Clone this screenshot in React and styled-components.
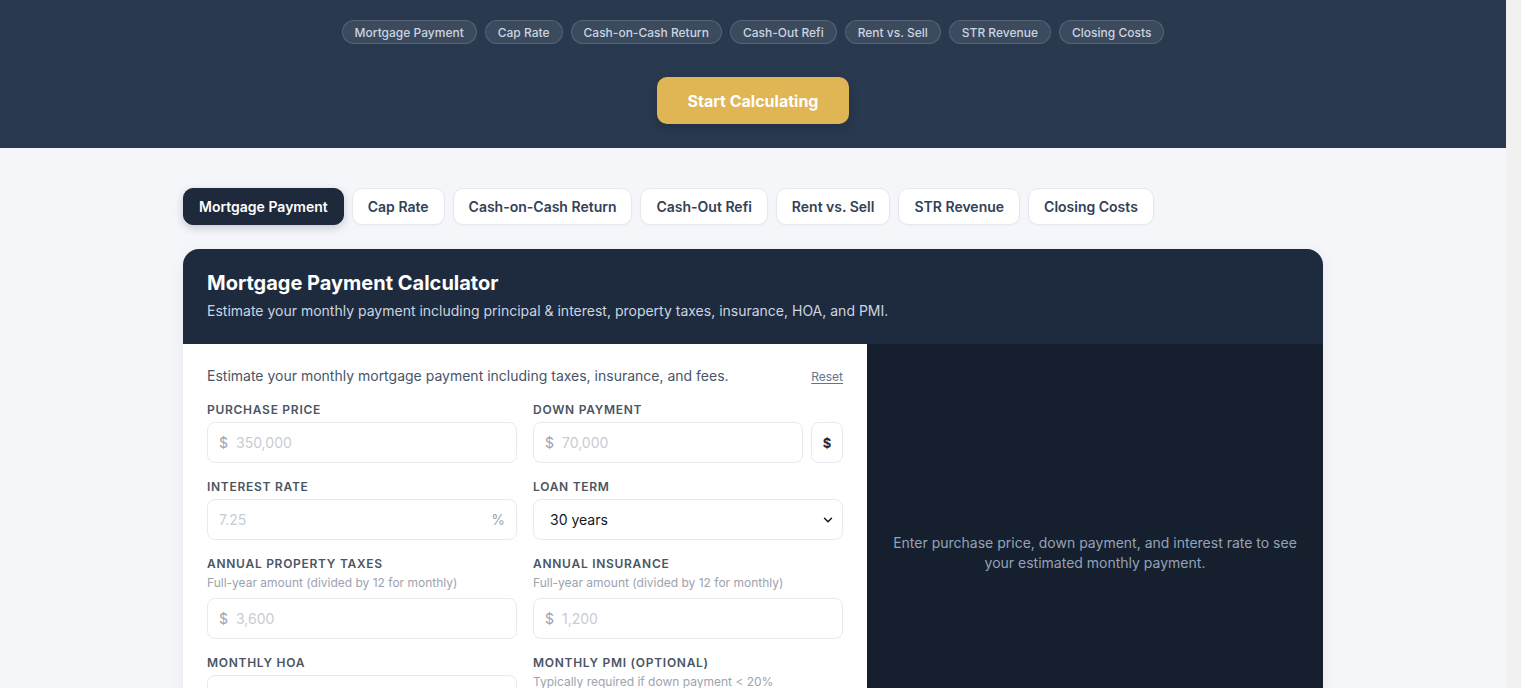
import React from 'react'
import styled, { createGlobalStyle } from 'styled-components'
import { ChevronDown } from 'lucide-react'

const GlobalStyle = createGlobalStyle`
  * { box-sizing: border-box; }
  body {
    margin: 0;
    background: #f1f1f1;
    padding-right: 15px;
    font-family: Inter, "Noto Sans", sans-serif;
    color: #1e293b;
  }
`

const Page = styled.div`
  background: #f4f6fa;
  min-height: 100vh;
`

const Hero = styled.section`
  background: #29394f;
  padding: 20px 0 24px;
  display: flex;
  flex-direction: column;
  align-items: center;
  gap: 33px;
`

const PillRow = styled.div`
  display: flex;
  gap: 8px;
  justify-content: center;
`

const Pill = styled.span`
  height: 24px;
  padding: 0 12px;
  display: inline-flex;
  align-items: center;
  border-radius: 999px;
  background: rgba(255, 255, 255, 0.09);
  border: 1px solid rgba(255, 255, 255, 0.14);
  color: #cbd5e1;
  font-size: 12px;
  font-weight: 500;
`

const CtaButton = styled.button`
  font-family: inherit;
  font-size: 16px;
  font-weight: 700;
  color: #fff;
  background: #e0b655;
  border: none;
  border-radius: 10px;
  height: 47px;
  padding: 0 31px;
  box-shadow: 0 4px 12px rgba(0, 0, 0, 0.18);
`

const Main = styled.main`
  max-width: 1140px;
  margin: 0 auto;
  padding: 40px 0 60px;
`

const Tabs = styled.div`
  display: flex;
  gap: 8px;
  margin-bottom: 24px;
`

const Tab = styled.button`
  font-family: inherit;
  font-size: 14px;
  font-weight: 600;
  height: 37px;
  padding: 0 15px;
  border-radius: 10px;
  border: 1px solid ${p => (p.$active ? '#1e293b' : '#e5e8ee')};
  background: ${p => (p.$active ? '#1e293b' : '#fff')};
  color: ${p => (p.$active ? '#fff' : '#334155')};
  box-shadow: ${p => (p.$active ? '0 3px 8px rgba(30,41,59,0.22)' : '0 1px 2px rgba(0,0,0,0.03)')};
`

const Card = styled.div`
  border-radius: 16px;
  overflow: hidden;
  box-shadow: 0 4px 16px rgba(15, 23, 42, 0.06);
`

const CardHeader = styled.header`
  background: #1e2b3e;
  padding: 22px 24px 23px;
`

const Title = styled.h2`
  margin: 0 0 6px;
  font-size: 20px;
  font-weight: 700;
  color: #fff;
  line-height: 24px;
`

const Subtitle = styled.p`
  margin: 0;
  font-size: 14px;
  color: #cbd5e1;
  line-height: 20px;
`

const CardBody = styled.div`
  display: grid;
  grid-template-columns: 60% 40%;
`

const FormPanel = styled.div`
  background: #fff;
  padding: 22px 24px 24px;
`

const IntroRow = styled.div`
  display: flex;
  justify-content: space-between;
  align-items: center;
  margin-bottom: 16px;
`

const Intro = styled.p`
  margin: 0;
  font-size: 14px;
  color: #475569;
  line-height: 20px;
`

const ResetLink = styled.a`
  font-size: 12px;
  color: #64748b;
  text-decoration: underline;
  text-underline-offset: 2px;
`

const FieldGrid = styled.div`
  display: grid;
  grid-template-columns: 1fr 1fr;
  column-gap: 16px;
  row-gap: 16px;
  align-items: start;
`

const Field = styled.div`
  display: flex;
  flex-direction: column;
`

const Label = styled.label`
  font-size: 12px;
  font-weight: 600;
  letter-spacing: 0.06em;
  text-transform: uppercase;
  color: #4b5563;
  line-height: 16px;
  margin-bottom: 4px;
`

const Help = styled.span`
  font-size: 12px;
  color: #9ca3af;
  line-height: 16px;
  margin: -1px 0 7px;
`

const InputRow = styled.div`
  display: flex;
  gap: 8px;
`

const InputBox = styled.div`
  flex: 1 1 auto;
  height: 41px;
  border: 1px solid #e8eaee;
  border-radius: 8px;
  display: flex;
  align-items: center;
  padding: 0 11px;
  gap: 8px;
`

const Affix = styled.span`
  font-size: 14px;
  color: #9ca3af;
`

const Input = styled.input`
  flex: 1;
  min-width: 0;
  border: none;
  outline: none;
  font-family: inherit;
  font-size: 14px;
  color: #111827;
  background: transparent;
  padding: 0;
  &::placeholder {
    color: #c7ccd4;
  }
`

const ModeToggle = styled.button`
  flex: none;
  width: 32px;
  height: 41px;
  border: 1px solid #e8eaee;
  border-radius: 8px;
  background: #fff;
  font-family: inherit;
  font-size: 13px;
  font-weight: 700;
  color: #1f2937;
`

const SelectWrap = styled.div`
  position: relative;
`

const Select = styled.select`
  width: 100%;
  height: 41px;
  border: 1px solid #e8eaee;
  border-radius: 8px;
  background: #fff;
  font-family: inherit;
  font-size: 14px;
  color: #111827;
  padding: 0 16px;
  appearance: none;
  outline: none;
`

const Arrow = styled(ChevronDown)`
  position: absolute;
  right: 8px;
  top: 50%;
  margin-top: -7px;
  pointer-events: none;
  color: #111827;
`

const ResultPanel = styled.div`
  background: #151f2d;
  padding: 24px;
  display: flex;
  align-items: center;
  justify-content: center;
`

const Placeholder = styled.p`
  margin: 0;
  max-width: 410px;
  text-align: center;
  font-size: 14px;
  line-height: 20px;
  color: #94a3b8;
`

const heroPills = ['Mortgage Payment', 'Cap Rate', 'Cash-on-Cash Return', 'Cash-Out Refi', 'Rent vs. Sell', 'STR Revenue', 'Closing Costs']

function MoneyInput({ placeholder, prefix = '$', suffix }) {
  return (
    <InputBox>
      {prefix && <Affix>{prefix}</Affix>}
      <Input placeholder={placeholder} />
      {suffix && <Affix>{suffix}</Affix>}
    </InputBox>
  )
}

export default function App() {
  return (
    <Page>
      <GlobalStyle />
      <Hero>
        <PillRow>
          {heroPills.map(name => <Pill key={name}>{name}</Pill>)}
        </PillRow>
        <CtaButton>Start Calculating</CtaButton>
      </Hero>
      <Main>
        <Tabs>
          {heroPills.map((name, i) => <Tab key={name} $active={i === 0}>{name}</Tab>)}
        </Tabs>
        <Card>
          <CardHeader>
            <Title>Mortgage Payment Calculator</Title>
            <Subtitle>Estimate your monthly payment including principal &amp; interest, property taxes, insurance, HOA, and PMI.</Subtitle>
          </CardHeader>
          <CardBody>
            <FormPanel>
              <IntroRow>
                <Intro>Estimate your monthly mortgage payment including taxes, insurance, and fees.</Intro>
                <ResetLink>Reset</ResetLink>
              </IntroRow>
              <FieldGrid>
                <Field>
                  <Label>Purchase Price</Label>
                  <MoneyInput placeholder="350,000" />
                </Field>
                <Field>
                  <Label>Down Payment</Label>
                  <InputRow>
                    <MoneyInput placeholder="70,000" />
                    <ModeToggle>$</ModeToggle>
                  </InputRow>
                </Field>
                <Field>
                  <Label>Interest Rate</Label>
                  <MoneyInput placeholder="7.25" prefix={null} suffix="%" />
                </Field>
                <Field>
                  <Label>Loan Term</Label>
                  <SelectWrap>
                    <Select defaultValue="30">
                      <option value="30">30 years</option>
                      <option value="20">20 years</option>
                      <option value="15">15 years</option>
                      <option value="10">10 years</option>
                    </Select>
                    <Arrow size={14} strokeWidth={2.5} />
                  </SelectWrap>
                </Field>
                <Field>
                  <Label>Annual Property Taxes</Label>
                  <Help>Full-year amount (divided by 12 for monthly)</Help>
                  <MoneyInput placeholder="3,600" />
                </Field>
                <Field>
                  <Label>Annual Insurance</Label>
                  <Help>Full-year amount (divided by 12 for monthly)</Help>
                  <MoneyInput placeholder="1,200" />
                </Field>
                <Field>
                  <Label>Monthly HOA</Label>
                  <MoneyInput placeholder="0" />
                </Field>
                <Field>
                  <Label>Monthly PMI (Optional)</Label>
                  <Help>Typically required if down payment &lt; 20%</Help>
                  <MoneyInput placeholder="0" />
                </Field>
              </FieldGrid>
            </FormPanel>
            <ResultPanel>
              <Placeholder>Enter purchase price, down payment, and interest rate to see your estimated monthly payment.</Placeholder>
            </ResultPanel>
          </CardBody>
        </Card>
      </Main>
    </Page>
  )
}
